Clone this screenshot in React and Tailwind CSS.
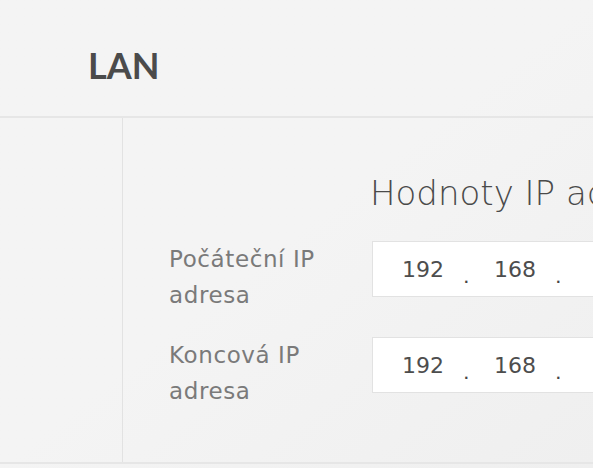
import React from 'react';

const rows = [
  { label: ['Počáteční IP', 'adresa'], parts: ['192', '168', ''] },
  { label: ['Koncová IP', 'adresa'], parts: ['192', '168', ''] },
];

const IpField = ({ parts }) => (
  <div className="flex h-[56px] w-[320px] shrink-0 items-center border border-[#e2e2e2] bg-white pl-[29px] text-[22px] text-[#4d4d4d]">
    {parts.map((p, i) => (
      <React.Fragment key={i}>
        <span className="w-[42px] shrink-0">{p}</span>
        {i < parts.length - 1 && (
          <span className="mt-[20px] w-[50px] shrink-0 pl-[20px] text-[12px] font-bold leading-[20px] text-[#444]">.</span>
        )}
      </React.Fragment>
    ))}
  </div>
);

const App = () => {
  return (
    <div
      className="h-[468px] w-full overflow-hidden bg-gradient-to-br from-[#f4f4f4] via-[#f4f4f4] to-[#efefef]"
      style={{ fontFamily: '"DejaVu Sans", Lato, sans-serif' }}
    >
      {/* Page header */}
      <header className="h-[118px] border-b-2 border-[#e6e6e6] pl-[88px] pt-[47px]">
        <h1
          className="text-[36px] font-bold leading-[36px] text-[#4b4b4b]"
          style={{ fontFamily: 'Lato, sans-serif' }}
        >
          LAN
        </h1>
      </header>

      <div className="flex h-[346px] border-b-2 border-[#e6e6e6]">
        {/* Side column */}
        <aside className="w-[123px] shrink-0 border-r border-[#e2e2e2]" />

        {/* Settings */}
        <main className="flex-1 overflow-hidden pt-[55px]">
          <h2 className="ml-[247px] whitespace-nowrap text-[34px] font-extralight leading-[40px] text-[#4a4a4a]">
            Hodnoty IP adres
          </h2>
          <div className="mt-[28px] flex flex-col gap-[40px]">
            {rows.map((row, idx) => (
              <div key={idx} className="flex h-[56px] items-start">
                <div className="ml-[46px] w-[203px] shrink-0 text-[23px] leading-[36px] tracking-[0.6px] text-[#7a7a7a]">
                  {row.label.map((l) => (
                    <div key={l} className="whitespace-nowrap">{l}</div>
                  ))}
                </div>
                <IpField parts={row.parts} />
              </div>
            ))}
          </div>
        </main>
      </div>
    </div>
  );
};

export default App;
